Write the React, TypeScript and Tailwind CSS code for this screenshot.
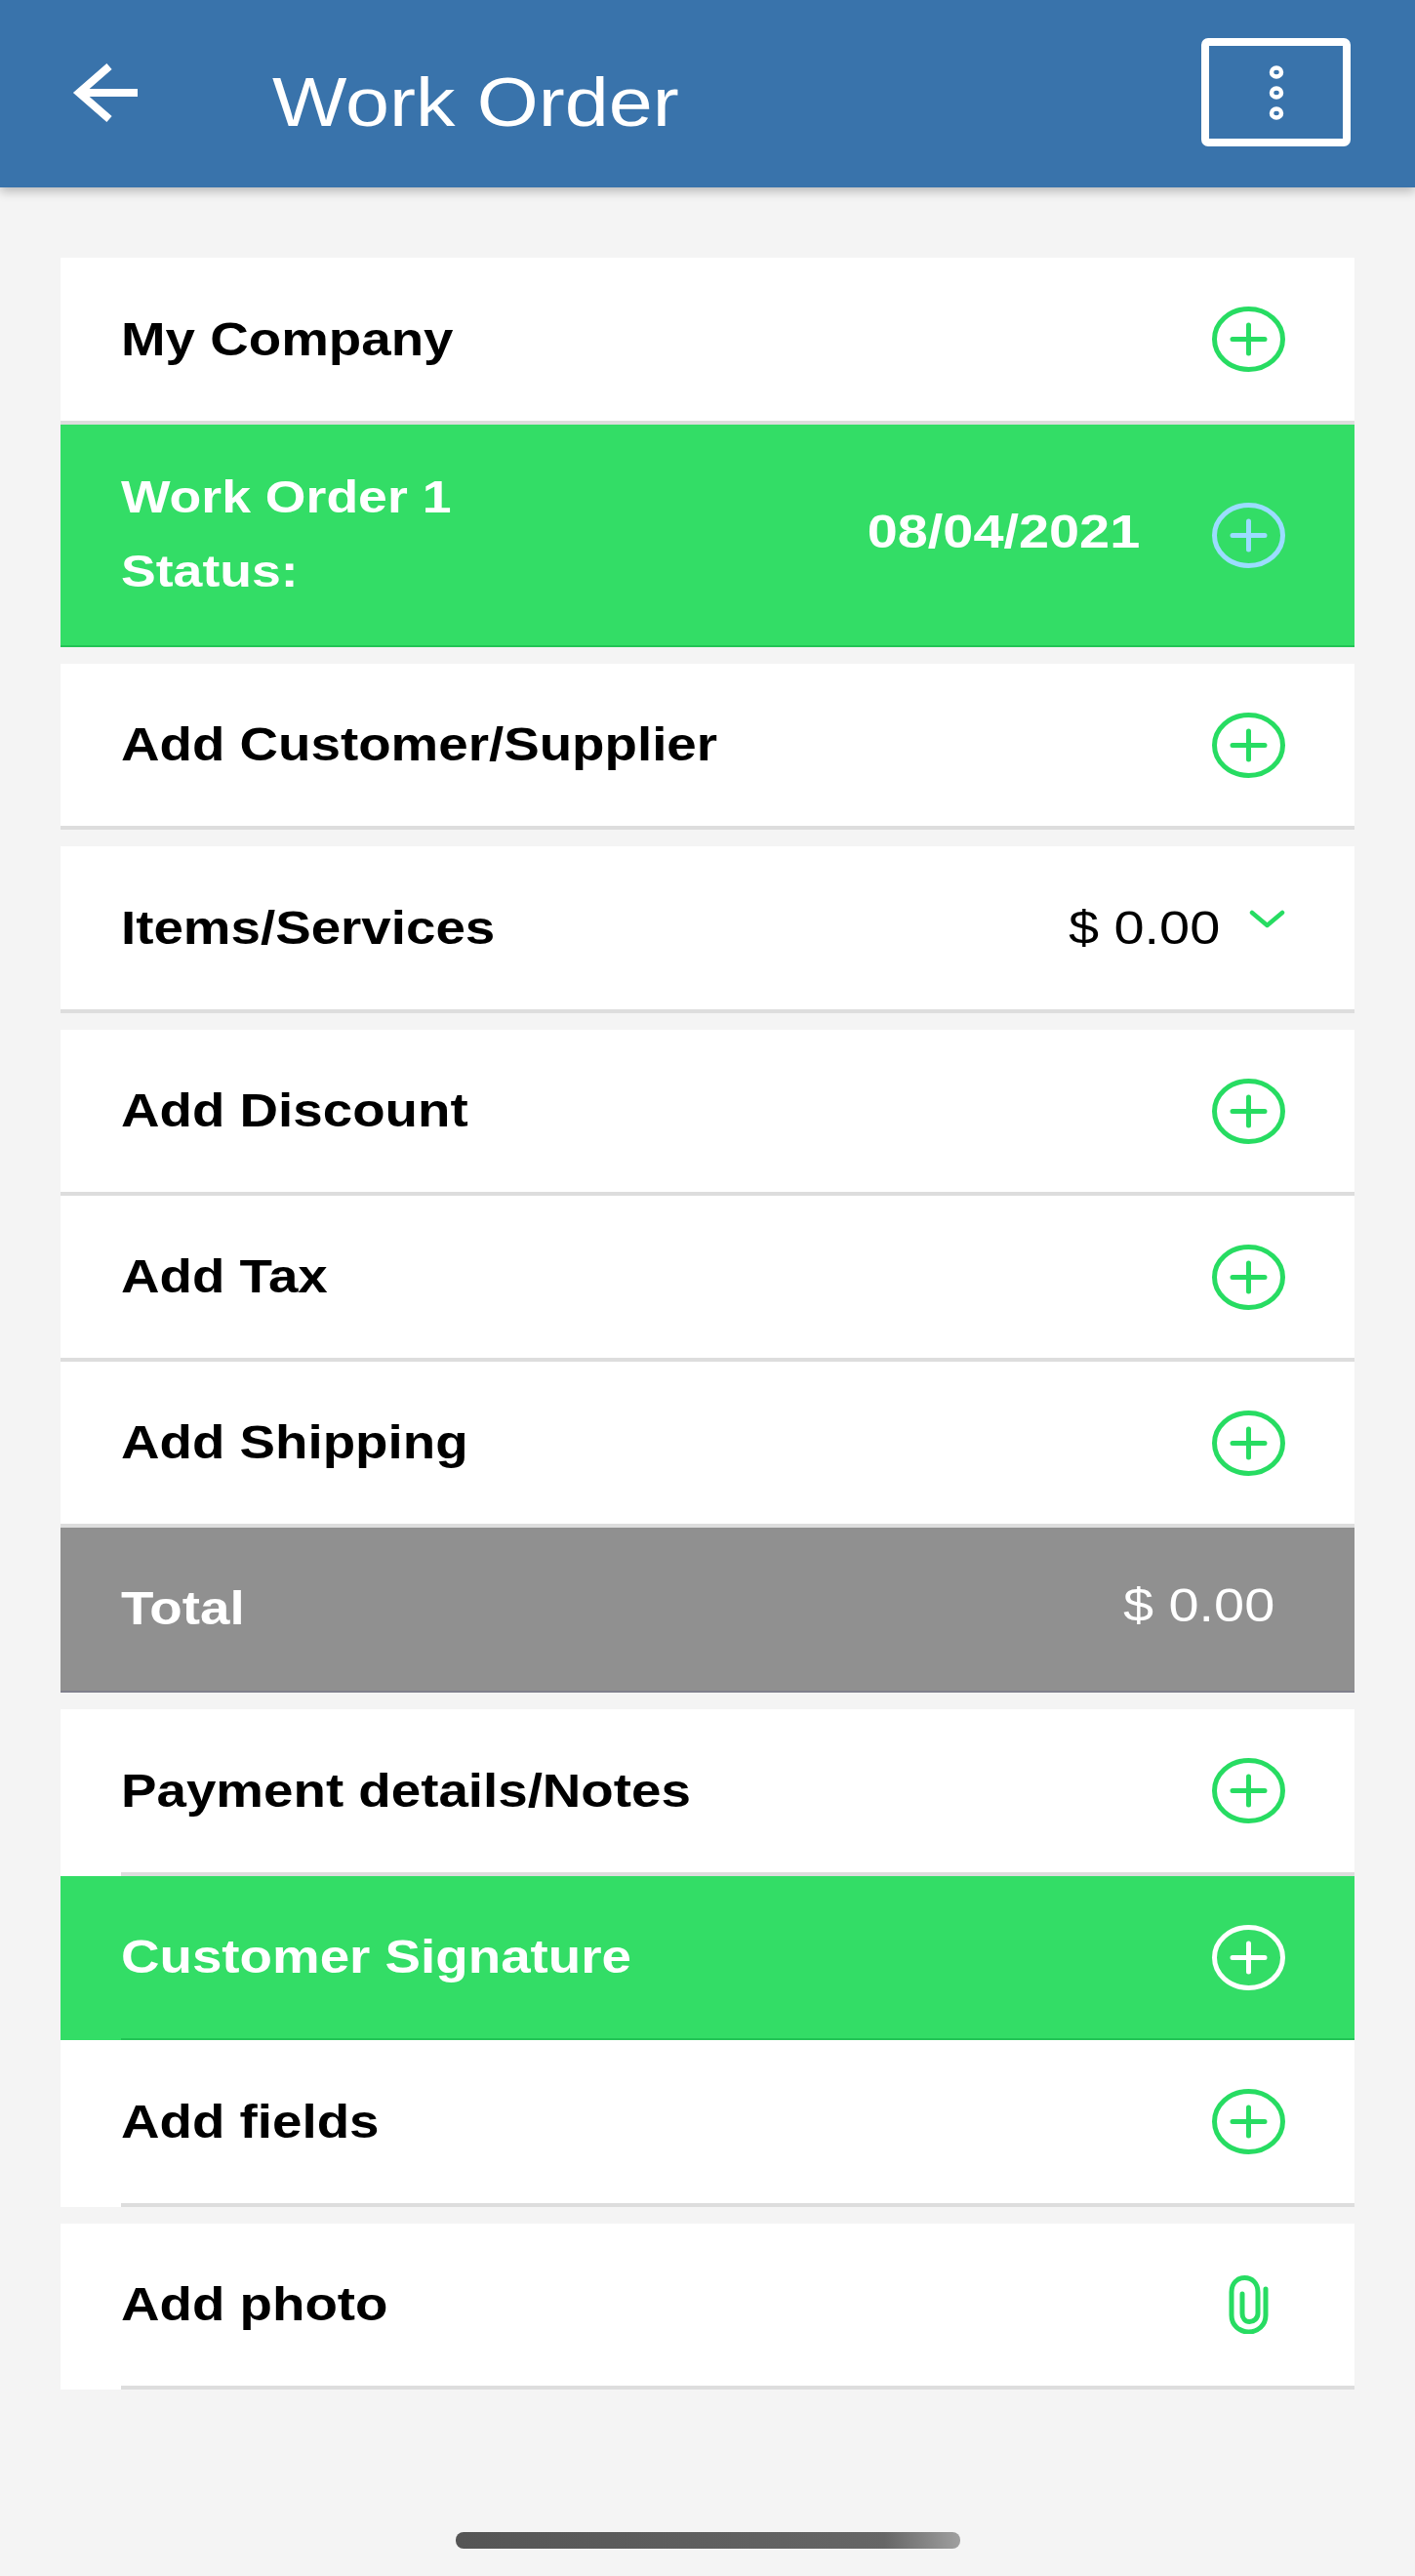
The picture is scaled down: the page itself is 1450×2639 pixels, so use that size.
import type { ReactNode } from "react";

const GREEN = "#27dc62";

function PlusIcon({ color = GREEN }: { color?: string }) {
  return (
    <svg width="75" height="67" viewBox="0 0 75 67" fill="none" stroke={color}>
      <ellipse cx="37.5" cy="33.5" rx="35" ry="31" strokeWidth="5" />
      <path d="M21 33.5H54M37.5 19V48" strokeWidth="5" strokeLinecap="round" />
    </svg>
  );
}

function ClipIcon() {
  return (
    <svg width="42" height="60" viewBox="0 0 42 60" fill="none" stroke={GREEN} strokeWidth="5" strokeLinecap="round">
      <path d="M38 14V41C38 51 30 58 20.5 58C11 58 3 51 3 41V17C3 8 9 2.5 16.5 2.5C24 2.5 30 8 30 17V39C30 44 26 47.5 21.5 47.5C17 47.5 14 44 14 39V19" />
    </svg>
  );
}

function Row({
  label,
  height = 170,
  bg = "bg-white",
  text = "text-black",
  line = "border-b-[4px] border-[#dddddd]",
  inset = false,
  gap = false,
  children,
}: {
  label: ReactNode;
  height?: number;
  bg?: string;
  text?: string;
  line?: string;
  inset?: boolean;
  gap?: boolean;
  children?: ReactNode;
}) {
  return (
    <div className={`${bg} ${gap ? "mt-[17px]" : ""}`} style={{ height }}>
      <div className={`h-full flex items-center justify-between pr-[71px] ${inset ? "ml-[62px]" : "pl-[62px]"} ${line}`}>
        <div className={`${text} font-bold text-[48px] leading-[56px] origin-left scale-x-[1.14] whitespace-nowrap`}>{label}</div>
        {children}
      </div>
    </div>
  );
}

export default function App() {
  return (
    <div className="relative h-[2639px] bg-[#f4f4f4] font-['Liberation_Sans',Arial,sans-serif]">
      <header className="h-[192px] bg-[#3973ab] shadow-[0_4px_10px_rgba(0,0,0,0.25)] flex items-start pl-[72px] pr-[66px] pt-[39px]">
        <svg className="mt-[26px]" width="70" height="60" viewBox="0 0 70 60" fill="none" stroke="white" strokeWidth="8">
          <path d="M40 3L9 30L40 57M9 30H69" />
        </svg>
        <div className="ml-[137px] mt-[20px] text-white text-[71px] leading-[92px] origin-left scale-x-[1.14] whitespace-nowrap">
          Work Order
        </div>
        <div className="ml-auto w-[153px] h-[111px] rounded-[7px] border-[8px] border-white flex items-center justify-center">
          <svg width="16" height="56" viewBox="0 0 16 56" fill="none" stroke="white" strokeWidth="4.5">
            <ellipse cx="8" cy="7" rx="5" ry="4.5" />
            <ellipse cx="8" cy="28" rx="5" ry="4.5" />
            <ellipse cx="8" cy="49" rx="5" ry="4.5" />
          </svg>
        </div>
      </header>

      <main className="mx-[62px] pt-[72px]">
        <Row label="My Company" height={171}>
          <PlusIcon />
        </Row>
        <div className="h-[228px] bg-[#33dd66] border-b-[2px] border-[#22c455] flex items-center pl-[62px] pr-[71px]">
          <div className="flex-1 mb-[3px] text-white font-bold text-[47px] leading-[76px] origin-left scale-x-[1.14]">
            <div>Work Order 1</div>
            <div>Status:</div>
          </div>
          <div className="mb-[6px] mr-[74px] text-white font-bold text-[49px] origin-right scale-x-[1.14]">08/04/2021</div>
          <PlusIcon color="#9bdcff" />
        </div>
        <Row label="Add Customer/Supplier" gap>
          <PlusIcon />
        </Row>
        <Row label="Items/Services" height={171} gap>
          <div className="flex items-center">
            <span className="text-black text-[49px] origin-right scale-x-[1.14]">$ 0.00</span>
            <svg className="ml-[30px] mb-[18px]" width="37" height="19" viewBox="0 0 37 19" fill="none" stroke={GREEN} strokeWidth="4.5" strokeLinecap="round" strokeLinejoin="round">
              <path d="M3 3L18.5 16L34 3" />
            </svg>
          </div>
        </Row>
        <Row label="Add Discount" gap>
          <PlusIcon />
        </Row>
        <Row label="Add Tax">
          <PlusIcon />
        </Row>
        <Row label="Add Shipping">
          <PlusIcon />
        </Row>
        <div className="h-[169px] bg-[#909090] border-b-[2px] border-[#80808c] flex items-center justify-between pl-[62px] pr-[82px]">
          <div className="mb-[2px] text-white font-bold text-[48px] origin-left scale-x-[1.14]">Total</div>
          <div className="mb-[8px] text-white text-[49px] origin-right scale-x-[1.14]">$ 0.00</div>
        </div>
        <Row label="Payment details/Notes" height={171} gap inset>
          <PlusIcon />
        </Row>
        <Row label="Customer Signature" height={168} bg="bg-[#33dd66]" text="text-white" line="border-b-[2px] border-[#22c455]" inset>
          <PlusIcon color="white" />
        </Row>
        <Row label="Add fields" height={171} inset>
          <PlusIcon />
        </Row>
        <Row label="Add photo" gap inset>
          <div className="w-[75px] flex justify-center">
            <ClipIcon />
          </div>
        </Row>
      </main>

      <div className="absolute left-[467px] top-[2594px] w-[517px] h-[17px] rounded-[8px] bg-gradient-to-r from-[#555555] via-[#666666] via-85% to-[#a0a0a0]" />
    </div>
  );
}
